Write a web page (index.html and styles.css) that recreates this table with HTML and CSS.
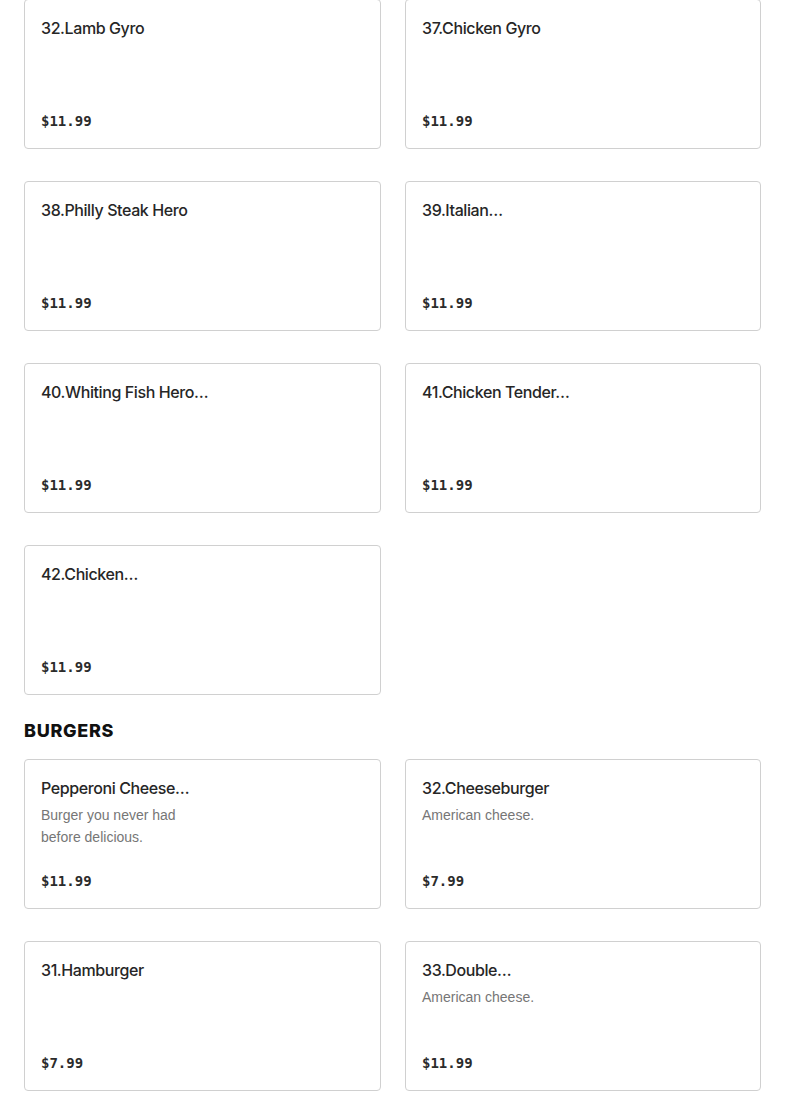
FILE: index.html
```html
<!DOCTYPE html>
<html>
<head>
<meta charset="utf-8">
<link rel="stylesheet" href="styles.css">
</head>
<body>
<main class="menu">
  <section class="section">
    <div class="grid">
      <div class="card"><div class="title">32.Lamb Gyro</div><div class="price">$11.99</div></div>
      <div class="card"><div class="title">37.Chicken Gyro</div><div class="price">$11.99</div></div>
      <div class="card"><div class="title">38.Philly Steak Hero</div><div class="price">$11.99</div></div>
      <div class="card"><div class="title">39.Italian…</div><div class="price">$11.99</div></div>
      <div class="card"><div class="title">40.Whiting Fish Hero…</div><div class="price">$11.99</div></div>
      <div class="card"><div class="title">41.Chicken Tender…</div><div class="price">$11.99</div></div>
      <div class="card"><div class="title">42.Chicken…</div><div class="price">$11.99</div></div>
    </div>
  </section>
  <section class="section">
    <h2 class="heading">BURGERS</h2>
    <div class="grid">
      <div class="card"><div class="title">Pepperoni Cheese…</div><div class="desc">Burger you never had before delicious.</div><div class="price">$11.99</div></div>
      <div class="card"><div class="title">32.Cheeseburger</div><div class="desc">American cheese.</div><div class="price">$7.99</div></div>
      <div class="card"><div class="title">31.Hamburger</div><div class="price">$7.99</div></div>
      <div class="card"><div class="title">33.Double…</div><div class="desc">American cheese.</div><div class="price">$11.99</div></div>
    </div>
  </section>
</main>
</body>
</html>
```
FILE: styles.css
```css
* { box-sizing: border-box; }
html, body { margin: 0; padding: 0; background: #fff; }
body { font-family: Inter, "Noto Sans", sans-serif; color: #262626; }
.menu { padding: 0 24px; margin-top: -1px; }
.grid {
  display: grid;
  grid-template-columns: 357px 356px;
  column-gap: 24px;
  row-gap: 32px;
}
.heading {
  margin: 24px 0 16px;
  font-size: 18px;
  line-height: 24px;
  font-weight: 800;
  letter-spacing: 0.7px;
  color: #111;
}
.card {
  height: 150px;
  border: 1px solid #d0d0d0;
  border-radius: 4px;
  padding: 16px 16px 15px;
  display: flex;
  flex-direction: column;
  align-items: flex-start;
}
.title {
  font-size: 16px;
  line-height: 24px;
  font-weight: 500;
  color: #262626;
  letter-spacing: -0.4px;
}
.desc {
  margin-top: 4px;
  max-width: 170px;
  font-family: "Liberation Sans", Arial, sans-serif;
  font-size: 14px;
  line-height: 22px;
  color: #767676;
}
.price {
  margin-top: auto;
  font-family: "DejaVu Sans Mono", "Liberation Mono", monospace;
  font-weight: bold;
  font-size: 14px;
  line-height: 24px;
  color: #2b2b2b;
}
```
